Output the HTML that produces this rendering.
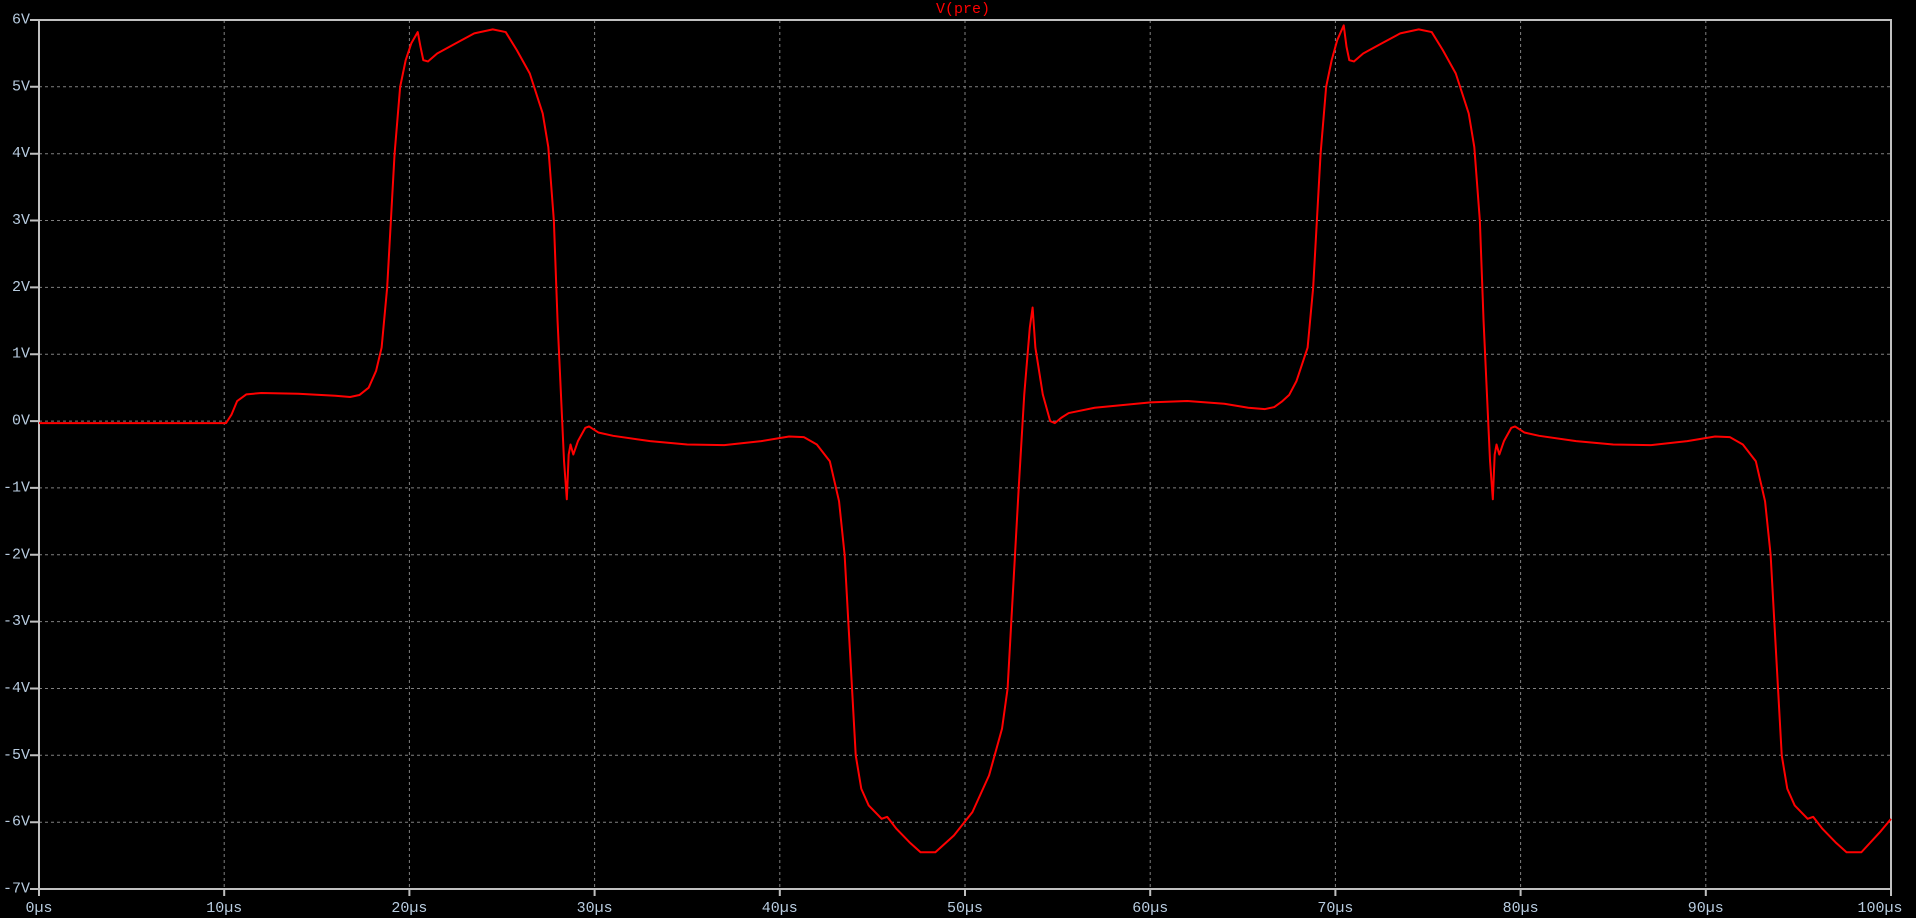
<!DOCTYPE html>
<html><head><meta charset="utf-8"><style>
html,body{margin:0;padding:0;background:#000;width:1916px;height:918px;overflow:hidden}
text{font-family:"Liberation Mono",monospace;font-size:15px}
</style></head><body>
<svg width="1916" height="918" viewBox="0 0 1916 918" xmlns="http://www.w3.org/2000/svg">
<rect width="1916" height="918" fill="#000"/>
<g stroke="#808080" stroke-width="1" stroke-dasharray="3,3" fill="none">
<line x1="39" x2="1891" y1="86.8" y2="86.8"/><line x1="39" x2="1891" y1="153.7" y2="153.7"/><line x1="39" x2="1891" y1="220.5" y2="220.5"/><line x1="39" x2="1891" y1="287.4" y2="287.4"/><line x1="39" x2="1891" y1="354.2" y2="354.2"/><line x1="39" x2="1891" y1="421.1" y2="421.1"/><line x1="39" x2="1891" y1="487.9" y2="487.9"/><line x1="39" x2="1891" y1="554.8" y2="554.8"/><line x1="39" x2="1891" y1="621.6" y2="621.6"/><line x1="39" x2="1891" y1="688.5" y2="688.5"/><line x1="39" x2="1891" y1="755.3" y2="755.3"/><line x1="39" x2="1891" y1="822.2" y2="822.2"/>
<line y1="20" y2="889" x1="224.2" x2="224.2"/><line y1="20" y2="889" x1="409.4" x2="409.4"/><line y1="20" y2="889" x1="594.6" x2="594.6"/><line y1="20" y2="889" x1="779.8" x2="779.8"/><line y1="20" y2="889" x1="965" x2="965"/><line y1="20" y2="889" x1="1150.2" x2="1150.2"/><line y1="20" y2="889" x1="1335.4" x2="1335.4"/><line y1="20" y2="889" x1="1520.6" x2="1520.6"/><line y1="20" y2="889" x1="1705.8" x2="1705.8"/>
</g>
<g stroke="#c0c0c0" stroke-width="2" fill="none">
<rect x="39" y="20" width="1852" height="869"/>
<path d="M30 20H39M30 86.8H39M30 153.7H39M30 220.5H39M30 287.4H39M30 354.2H39M30 421.1H39M30 487.9H39M30 554.8H39M30 621.6H39M30 688.5H39M30 755.3H39M30 822.2H39M30 889H39"/>
<path d="M39 889V896M224.2 889V896M409.4 889V896M594.6 889V896M779.8 889V896M965 889V896M1150.2 889V896M1335.4 889V896M1520.6 889V896M1705.8 889V896M1891 889V896"/>
</g>
<g fill="#b8cce0" text-anchor="end" dominant-baseline="central">
<text x="30" y="20">6V</text><text x="30" y="86.8">5V</text><text x="30" y="153.7">4V</text><text x="30" y="220.5">3V</text><text x="30" y="287.4">2V</text><text x="30" y="354.2">1V</text><text x="30" y="421.1">0V</text><text x="30" y="487.9">-1V</text><text x="30" y="554.8">-2V</text><text x="30" y="621.6">-3V</text><text x="30" y="688.5">-4V</text><text x="30" y="755.3">-5V</text><text x="30" y="822.2">-6V</text><text x="30" y="889">-7V</text>
</g>
<g fill="#b8cce0" text-anchor="middle">
<text x="39" y="912">0µs</text><text x="224.2" y="912">10µs</text><text x="409.4" y="912">20µs</text><text x="594.6" y="912">30µs</text><text x="779.8" y="912">40µs</text><text x="965" y="912">50µs</text><text x="1150.2" y="912">60µs</text><text x="1335.4" y="912">70µs</text><text x="1520.6" y="912">80µs</text><text x="1705.8" y="912">90µs</text><text x="1880" y="912">100µs</text>
</g>
<text x="963" y="13" fill="#ff0000" text-anchor="middle">V(pre)</text>
<g transform="translate(39,421.1) scale(18.52,-66.846)">
<polyline fill="none" stroke="#ff0000" stroke-width="2" vector-effect="non-scaling-stroke" stroke-linejoin="round" points="
0,-0.03 10.1,-0.03 10.4,0.1 10.7,0.3 11.2,0.4 12,0.42 14,0.41 16,0.38 16.8,0.36 17.3,0.39 17.8,0.5 18.2,0.75 18.5,1.1 18.8,2 19,3 19.2,4 19.5,5 19.8,5.4 20.1,5.65 20.45,5.82 20.6,5.6 20.75,5.4 21,5.38 21.5,5.5 22.5,5.65 23.5,5.8 24.5,5.86 25.2,5.82 25.8,5.55 26.5,5.2 27.2,4.6 27.5,4.1 27.8,3 28.0,1.5 28.2,0.3 28.35,-0.6 28.5,-1.17 28.6,-0.5 28.7,-0.35 28.85,-0.5 29.1,-0.3 29.5,-0.1 29.7,-0.08 30.2,-0.17 31,-0.22 33,-0.3 35,-0.35 37,-0.36 39,-0.3 40.5,-0.23 41.3,-0.24 42,-0.35 42.7,-0.6 43.2,-1.2 43.5,-2 43.8,-3.5 44.1,-5 44.4,-5.5 44.8,-5.75 45.5,-5.95 45.8,-5.92 46.3,-6.1 47,-6.3 47.6,-6.45 48.4,-6.45 49.4,-6.2 50.4,-5.85 51.3,-5.3 52,-4.6 52.3,-4 52.6,-2.5 52.9,-1 53.2,0.4 53.5,1.4 53.65,1.7 53.8,1.1 54.2,0.4 54.6,0.0 54.85,-0.03 55.2,0.05 55.6,0.12 57,0.2 60,0.28 62,0.3 64,0.26 65.3,0.2 66.2,0.18 66.7,0.21 67.1,0.29 67.5,0.39 67.9,0.6 68.2,0.85
68.5,1.1 68.8,2 69,3 69.2,4 69.5,5 69.8,5.4 70.1,5.7 70.45,5.92 70.6,5.6 70.75,5.4 71,5.38 71.5,5.5 72.5,5.65 73.5,5.8 74.5,5.86 75.2,5.82 75.8,5.55 76.5,5.2 77.2,4.6 77.5,4.1 77.8,3 78.0,1.5 78.2,0.3 78.35,-0.6 78.5,-1.17 78.6,-0.5 78.7,-0.35 78.85,-0.5 79.1,-0.3 79.5,-0.1 79.7,-0.08 80.2,-0.17 81,-0.22 83,-0.3 85,-0.35 87,-0.36 89,-0.3 90.5,-0.23 91.3,-0.24 92,-0.35 92.7,-0.6 93.2,-1.2 93.5,-2 93.8,-3.5 94.1,-5 94.4,-5.5 94.8,-5.75 95.5,-5.95 95.8,-5.92 96.3,-6.1 97,-6.3 97.6,-6.45 98.4,-6.45 99.4,-6.15 100,-5.95"/>
</g>
</svg>
</body></html>
